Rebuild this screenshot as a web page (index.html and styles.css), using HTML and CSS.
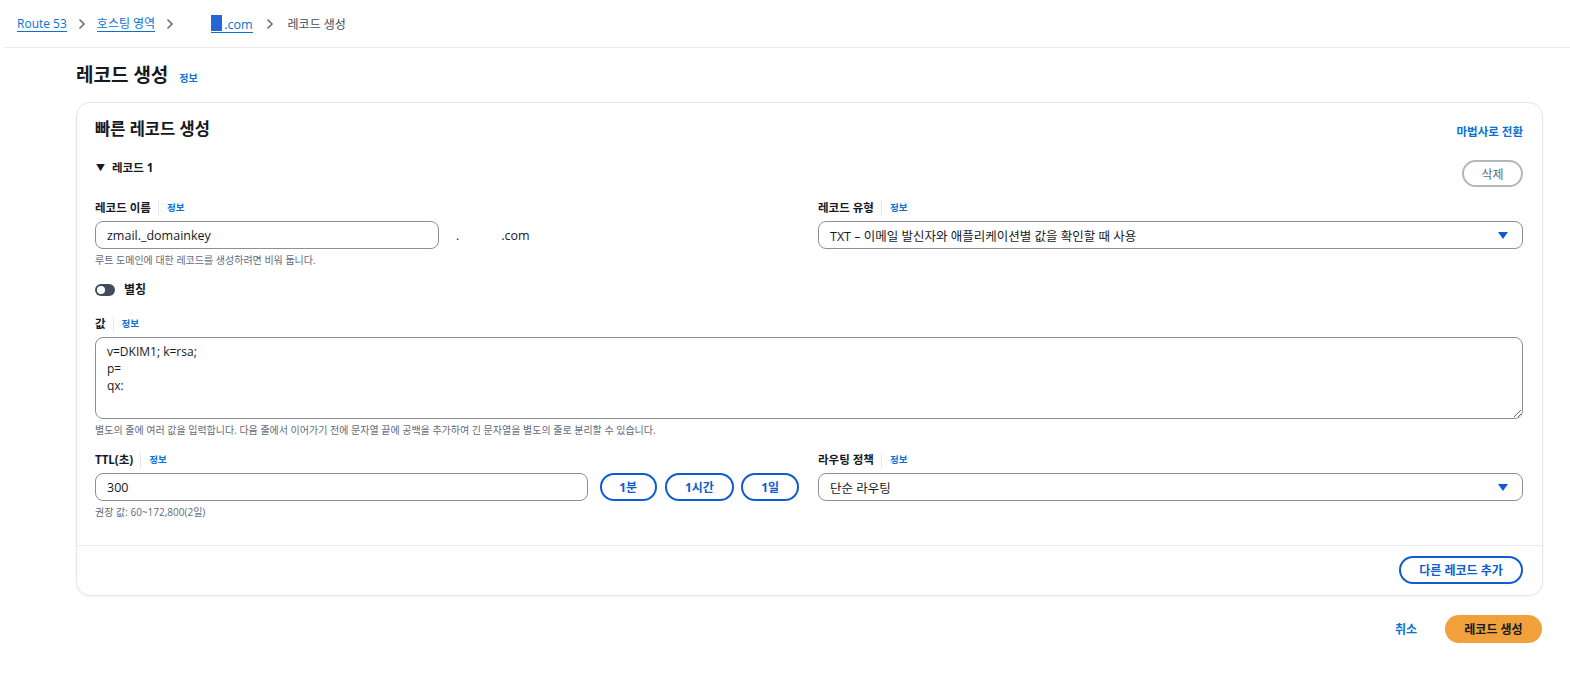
FILE: index.html
```html
<!DOCTYPE html>
<html lang="ko">
<head>
    <meta charset="UTF-8">
    <title>레코드 생성</title>
    <link rel="stylesheet" href="styles.css">
</head>
<body>
    <div class="crumbs">
        <a href="javascript:;">Route 53</a>
        <svg class="sep" width="8" height="12" viewBox="0 0 8 12"><path d="M1.5 1.5 L6 6 L1.5 10.5" fill="none" stroke="#5f6b7a" stroke-width="1.5"/></svg>
        <a href="javascript:;">호스팅 영역</a>
        <svg class="sep" width="8" height="12" viewBox="0 0 8 12"><path d="M1.5 1.5 L6 6 L1.5 10.5" fill="none" stroke="#5f6b7a" stroke-width="1.5"/></svg>
        <a href="javascript:;" class="domain"><span class="mask"></span>.com</a>
        <svg class="sep" width="8" height="12" viewBox="0 0 8 12"><path d="M1.5 1.5 L6 6 L1.5 10.5" fill="none" stroke="#5f6b7a" stroke-width="1.5"/></svg>
        <span class="here">레코드 생성</span>
    </div>

    <div class="main">
        <h1 class="title">레코드 생성 <a href="javascript:;" class="info">정보</a></h1>

        <div class="card">
            <div class="card-head">
                <h2>빠른 레코드 생성</h2>
                <a href="javascript:;" class="link">마법사로 전환</a>
            </div>

            <div class="rec-row">
                <div class="rec-name"><span class="tri">▼</span>레코드 1</div>
                <button class="btn-gray">삭제</button>
            </div>

            <div class="grid">
                <div class="field">
                    <div class="label">레코드 이름 <span class="bar"></span><a href="javascript:;" class="info">정보</a></div>
                    <div class="name-row">
                        <div class="input name-input">zmail._domainkey</div>
                        <span class="dot">.</span>
                        <span class="suffix">.com</span>
                    </div>
                    <div class="help">루트 도메인에 대한 레코드를 생성하려면 비워 둡니다.</div>
                </div>
                <div class="field">
                    <div class="label">레코드 유형 <span class="bar"></span><a href="javascript:;" class="info">정보</a></div>
                    <div class="input select">TXT – 이메일 발신자와 애플리케이션별 값을 확인할 때 사용<span class="caret"></span></div>
                </div>
            </div>

            <div class="toggle-row">
                <span class="toggle"><span class="knob"></span></span>
                <span>별칭</span>
            </div>

            <div class="field value-field">
                <div class="label">값 <span class="bar"></span><a href="javascript:;" class="info">정보</a></div>
                <textarea class="area">v=DKIM1; k=rsa;
p=
qx:</textarea>
                <div class="help">별도의 줄에 여러 값을 입력합니다. 다음 줄에서 이어가기 전에 문자열 끝에 공백을 추가하여 긴 문자열을 별도의 줄로 분리할 수 있습니다.</div>
            </div>

            <div class="grid ttl-grid">
                <div class="field">
                    <div class="label">TTL(초) <span class="bar"></span><a href="javascript:;" class="info">정보</a></div>
                    <div class="ttl-row">
                        <div class="input ttl-input">300</div>
                        <button class="btn-blue b1">1분</button>
                        <button class="btn-blue b2">1시간</button>
                        <button class="btn-blue b3">1일</button>
                    </div>
                    <div class="help">권장 값: 60~172,800(2일)</div>
                </div>
                <div class="field">
                    <div class="label">라우팅 정책 <span class="bar"></span><a href="javascript:;" class="info">정보</a></div>
                    <div class="input select">단순 라우팅<span class="caret"></span></div>
                </div>
            </div>

            <div class="card-foot">
                <button class="btn-blue">다른 레코드 추가</button>
            </div>
        </div>

        <div class="actions">
            <a href="javascript:;" class="cancel">취소</a>
            <button class="btn-orange">레코드 생성</button>
        </div>
    </div>
</body>
</html>
```

FILE: styles.css
```css
body{
    margin: 0;
    font-family: "Open Sans", "Noto Sans CJK KR", sans-serif;
    color: #16191f;
    background: #fff;
}
a{
    color: #0972d3;
    text-decoration: none;
}
button{
    font-family: inherit;
    cursor: pointer;
    background: #fff;
}
.crumbs{
    height: 47px;
    margin-left: 4px;
    padding-left: 13px;
    border-bottom: 1px solid #e9ebed;
    display: flex;
    align-items: center;
    font-size: 12px;
}
.crumbs a{
    border-bottom: 1px solid #0972d3;
    line-height: 15px;
}
.crumbs .sep{
    margin: 0 11px 0 11px;
}
.crumbs .sep:nth-of-type(3){
    margin: 0 14px 0 13px;
}
.crumbs .domain{
    margin-left: 26px;
    display: flex;
    align-items: flex-end;
    font-size: 12.5px;
}
.crumbs .mask{
    display: inline-block;
    width: 11px;
    height: 16px;
    background: #2266d8;
    margin: 0 2px 1px 0;
}
.crumbs .here{
    color: #414d5c;
}
.main{
    padding: 15px 27px 0 76px;
}
.title{
    margin: 0;
    font-size: 19px;
    line-height: 24px;
    font-weight: 700;
}
.title .info{
    margin-left: 6px;
}
.info{
    font-size: 10px;
    font-weight: 700;
}
.card{
    margin-top: 12px;
    border: 1px solid #e4e6e9;
    border-radius: 14px;
    box-shadow: 0 1px 3px rgba(0,0,0,0.05);
}
.card-head{
    display: flex;
    justify-content: space-between;
    align-items: center;
    padding: 15px 19px 0 18px;
}
.card-head h2{
    margin: 0;
    font-size: 16.5px;
    line-height: 22px;
    font-weight: 700;
}
.link{
    font-size: 11.5px;
    font-weight: 700;
    margin-top: 4px;
}
.rec-row{
    display: flex;
    justify-content: space-between;
    align-items: flex-start;
    padding: 20px 19px 0 18px;
}
.rec-name{
    font-size: 11.5px;
    font-weight: 700;
    line-height: 16px;
}
.rec-name .tri{
    font-size: 9px;
    margin: 0 7px 0 1px;
    vertical-align: 1px;
}
.btn-gray{
    width: 61px;
    height: 27px;
    border: 2px solid #b3b6bb;
    border-radius: 14px;
    font-size: 12px;
    color: #5f6b7a;
}
.grid{
    display: grid;
    grid-template-columns: 704px 1fr;
    column-gap: 19px;
    padding: 13px 19px 0 18px;
}
.label{
    display: flex;
    align-items: center;
    font-size: 11.5px;
    font-weight: 700;
    line-height: 16px;
}
.label .bar{
    width: 1px;
    height: 15px;
    background: #e4e6e9;
    margin: 0 8px 0 7px;
}
.label .info{
    font-size: 9.5px;
}
.input{
    height: 28px;
    box-sizing: border-box;
    border: 1.5px solid #8d9096;
    border-radius: 8px;
    margin-top: 5px;
    padding: 0 11px;
    display: flex;
    align-items: center;
    font-size: 12.5px;
    color: #16191f;
}
.name-row{
    display: flex;
    align-items: center;
}
.name-input{
    width: 344px;
}
.dot{
    margin: 5px 0 0 17px;
    font-size: 12px;
}
.suffix{
    margin: 5px 0 0 42px;
    font-size: 12.5px;
}
.help{
    font-size: 10px;
    color: #5f6b7a;
    line-height: 14px;
    margin-top: 4px;
}
.select{
    justify-content: space-between;
}
.caret{
    width: 0;
    height: 0;
    border-left: 5px solid transparent;
    border-right: 5px solid transparent;
    border-top: 7px solid #0f5bd0;
    margin-right: 3px;
}
.toggle-row{
    display: flex;
    align-items: center;
    padding: 15px 19px 0 18px;
    font-size: 12px;
    font-weight: 700;
    line-height: 16px;
}
.toggle{
    width: 20px;
    height: 12px;
    border-radius: 6px;
    background: #414d5c;
    display: flex;
    align-items: center;
    padding-left: 2px;
    box-sizing: border-box;
    margin-right: 9px;
}
.toggle .knob{
    width: 8px;
    height: 8px;
    border-radius: 50%;
    background: #fff;
}
.value-field{
    margin-top: 18px;
    padding: 0 19px 0 18px;
}
.area{
    display: block;
    width: 100%;
    height: 82px;
    box-sizing: border-box;
    border: 1.5px solid #8d9096;
    border-radius: 8px;
    margin-top: 5px;
    padding: 5px 11px;
    font-family: inherit;
    font-size: 12px;
    line-height: 17px;
    color: #16191f;
    resize: vertical;
}
.ttl-grid{
    padding-top: 15px;
}
.ttl-row{
    display: flex;
    align-items: flex-end;
}
.ttl-input{
    width: 495px;
}
.btn-blue{
    height: 28px;
    border: 2px solid #0f5bd0;
    border-radius: 14px;
    color: #0f5bd0;
    font-size: 12px;
    font-weight: 700;
    padding: 0;
}
.ttl-row .btn-blue{
    margin-left: 8px;
}
.ttl-row .b1{
    width: 57px;
    margin-left: 12px;
}
.ttl-row .b2{
    width: 70px;
}
.ttl-row .b3{
    width: 58px;
    margin-left: 7px;
}
.card-foot{
    margin-top: 26px;
    border-top: 1px solid #e9ebed;
    padding: 10px 19px 11px 0;
    display: flex;
    justify-content: flex-end;
}
.card-foot .btn-blue{
    width: 124px;
}
.actions{
    display: flex;
    justify-content: flex-end;
    align-items: center;
    margin-top: 19px;
    margin-right: 1px;
}
.cancel{
    font-size: 12px;
    font-weight: 700;
    margin-right: 28px;
}
.btn-orange{
    width: 97px;
    height: 28px;
    border: none;
    border-radius: 14px;
    background: #f0a13c;
    color: #16191f;
    font-size: 12px;
    font-weight: 700;
}
```
